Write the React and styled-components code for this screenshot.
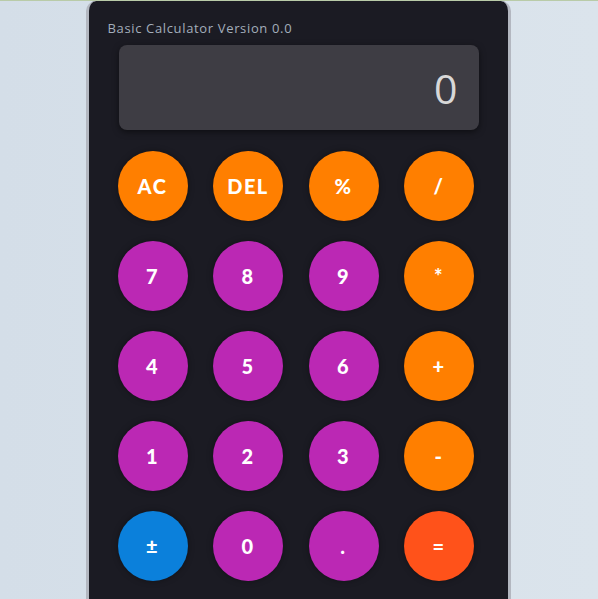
import React from "react";
import styled, { createGlobalStyle } from "styled-components";

const GlobalStyle = createGlobalStyle`
  html, body {
    margin: 0;
    padding: 0;
    height: 100%;
  }
  body {
    background: linear-gradient(90deg, #d4dee8 0%, #dbe4ec 100%);
    border-top: 1px solid #b9cba8;
    box-sizing: border-box;
    overflow: hidden;
    font-family: "Open Sans", "Noto Sans", sans-serif;
  }
`;

const Card = styled.div`
  width: 425px;
  margin: 0 auto;
  position: relative;
  left: -1px;
  height: 640px;
  background: #1b1b23;
  border: 3px solid #b3b7c0;
  border-bottom: none;
  border-top: none;
  border-radius: 10px 10px 0 0;
  padding: 18px 0 0;
  box-sizing: border-box;
`;

const Title = styled.div`
  font-size: 13px;
  color: #a3aebb;
  padding-left: 19px;
  letter-spacing: 0.65px;
  line-height: 18px;
`;

const Display = styled.div`
  margin: 8px 0 0 30px;
  width: 360px;
  height: 85px;
  box-sizing: border-box;
  background: #3e3d44;
  border-radius: 8px;
  box-shadow: 0 2px 6px rgba(0, 0, 0, 0.5);
  display: flex;
  align-items: center;
  justify-content: flex-end;
  padding-right: 21px;
  font-size: 41px;
  color: #d8d8d8;
`;

const Keypad = styled.div`
  display: grid;
  grid-template-columns: repeat(4, 70px);
  grid-auto-rows: 70px;
  column-gap: 25.5px;
  row-gap: 20px;
  margin: 21px 0 0 29px;
`;

const colors = {
  op: "#ff7f00",
  num: "#bb28b4",
  sign: "#0b80db",
  eq: "#ff521a",
};

const Key = styled.button`
  width: 70px;
  height: 70px;
  border-radius: 50%;
  border: none;
  padding: 0;
  background: ${(p) => colors[p.$kind]};
  color: #ffffff;
  font-family: "Lato", "DejaVu Sans", sans-serif;
  font-weight: 900;
  font-size: 20px;
  letter-spacing: 1.5px;
  box-shadow: 0 0 6px rgba(0, 0, 0, 0.35);
  cursor: pointer;
  display: flex;
  align-items: center;
  justify-content: center;
`;

const keys = [
  ["AC", "op"], ["DEL", "op"], ["%", "op"], ["/", "op"],
  ["7", "num"], ["8", "num"], ["9", "num"], ["*", "op"],
  ["4", "num"], ["5", "num"], ["6", "num"], ["+", "op"],
  ["1", "num"], ["2", "num"], ["3", "num"], ["-", "op"],
  ["±", "sign"], ["0", "num"], [".", "num"], ["=", "eq"],
];

export default function App() {
  return (
    <>
      <GlobalStyle />
      <Card>
        <Title>Basic Calculator Version 0.0</Title>
        <Display>0</Display>
        <Keypad>
          {keys.map(([label, kind]) => (
            <Key key={label} $kind={kind}>
              {label}
            </Key>
          ))}
        </Keypad>
      </Card>
    </>
  );
}
